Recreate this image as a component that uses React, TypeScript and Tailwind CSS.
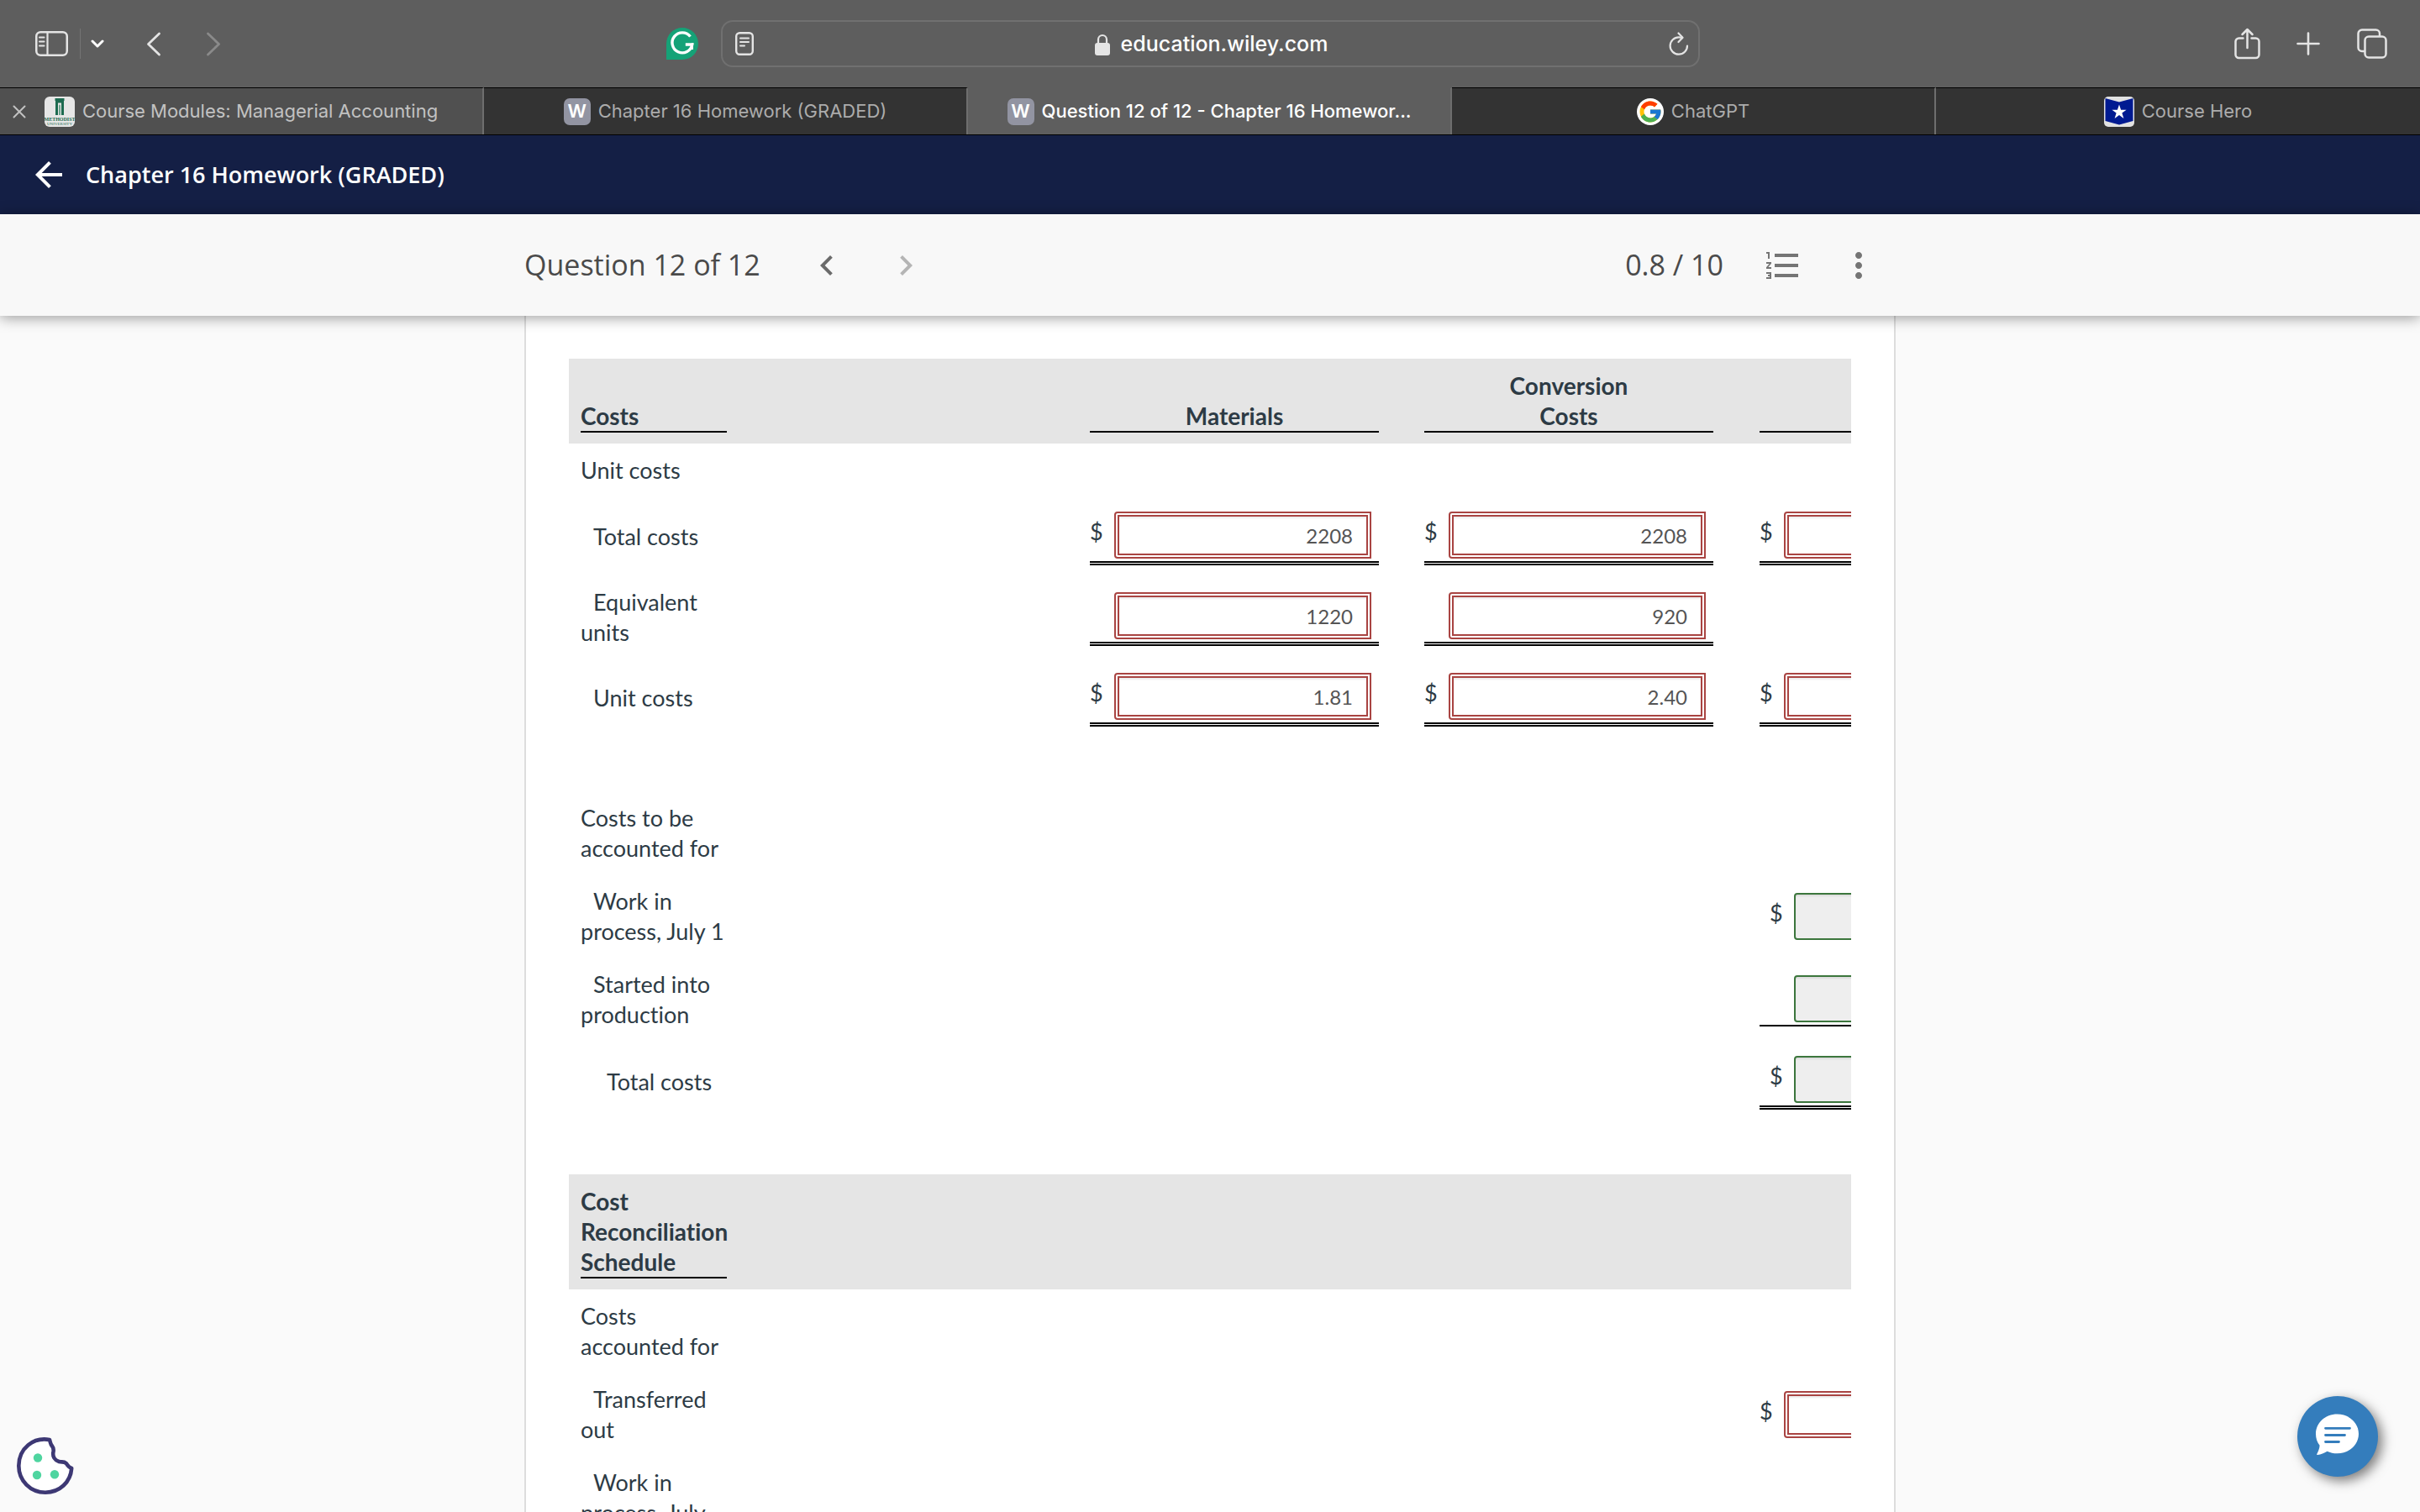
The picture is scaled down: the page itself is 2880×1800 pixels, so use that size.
import React, { ReactNode } from 'react';
import { FcGoogle } from 'react-icons/fc';
import { MdArrowBack, MdChevronLeft, MdChevronRight, MdFormatListNumbered, MdMoreVert } from 'react-icons/md';

type Rule = 'none' | 'single' | 'double';

interface Field {
    value?: string;
    dollar?: boolean;
    correct?: boolean;
    rule: Rule;
}

interface Row {
    label: string;
    level: 0 | 1 | 2;
    compact?: boolean;
    cells?: (Field | null)[];
}

const indents = ['', 'indent-[15px]', 'indent-[31px]'];

// Total lines drawn under the amounts
const rules: Record<Rule, string> = {
    none: 'hidden',
    single: 'h-[2px] bg-black',
    double: 'h-[5px] border-y-2 border-black',
};

const columns = ['Materials', 'Conversion Costs', 'Total'];

const unitRows: Row[] = [
    { label: 'Unit costs', level: 0 },
    {
        label: 'Total costs',
        level: 1,
        compact: true,
        cells: [
            { value: '2208', dollar: true, rule: 'double' },
            { value: '2208', dollar: true, rule: 'double' },
            { dollar: true, rule: 'double' },
        ],
    },
    {
        label: 'Equivalent units',
        level: 1,
        compact: true,
        cells: [{ value: '1220', rule: 'double' }, { value: '920', rule: 'double' }, null],
    },
    {
        label: 'Unit costs',
        level: 1,
        compact: true,
        cells: [
            { value: '1.81', dollar: true, rule: 'double' },
            { value: '2.40', dollar: true, rule: 'double' },
            { dollar: true, rule: 'double' },
        ],
    },
];

const accountRows: Row[] = [
    { label: 'Costs to be accounted for', level: 0 },
    { label: 'Work in process, July 1', level: 1, cells: [null, null, { dollar: true, correct: true, rule: 'none' }] },
    { label: 'Started into production', level: 1, cells: [null, null, { correct: true, rule: 'single' }] },
    { label: 'Total costs', level: 2, cells: [null, null, { dollar: true, correct: true, rule: 'double' }] },
];

const reconciliationRows: Row[] = [
    { label: 'Costs accounted for', level: 0 },
    { label: 'Transferred out', level: 1, cells: [null, null, { dollar: true, rule: 'none' }] },
    { label: 'Work in process, July', level: 1 },
];

function MoneyField({ field, label }: { field: Field; label: string }) {
    return (
        <>
            <div className={`flex items-center pr-[9px] ${field.correct ? 'pl-3' : ''}`}>
                <span className="w-[29px] shrink-0 pb-[6px]">{field.dollar ? '$' : ''}</span>
                <input
                    type="text"
                    aria-label={label}
                    defaultValue={field.value}
                    readOnly={field.correct}
                    className={`mt-[6px] mb-[3px] h-14 w-full min-w-0 rounded-l px-4 text-right text-2xl text-[#555] shadow-[inset_0_2px_2px_rgba(0,0,0,0.075)] outline-none ${
                        field.correct ? 'border-2 border-[#3c763d] bg-[#eee]' : 'border-[6px] border-double border-[#a94442] bg-white'
                    }`}
                />
            </div>
            <div className={rules[field.rule]} />
        </>
    );
}

function CostRow({ row }: { row: Row }) {
    return (
        <tr>
            <td className={`px-[14px] ${row.compact ? 'py-3' : 'pt-[14px] pb-[13px]'} ${indents[row.level]}`}>{row.label}</td>
            {columns.map((column, i) => {
                const field = row.cells?.[i];
                return (
                    <React.Fragment key={column}>
                        <td />
                        <td className={field ? 'px-[14px] pt-3 pb-[14px]' : ''}>
                            {field && <MoneyField field={field} label={`${row.label} ${column}`} />}
                        </td>
                    </React.Fragment>
                );
            })}
        </tr>
    );
}

function SpacerRow() {
    return (
        <tr>
            <td colSpan={7} className="h-[63px]" />
        </tr>
    );
}

function Costs() {
    return (
        <table className="w-[1800px] table-fixed border-collapse text-left font-['Lato',sans-serif] text-[27px] leading-9 text-[#2d3b45] [font-variant-ligatures:none]">
            <colgroup>
                <col className="w-[202px]" />
                <col className="w-[404px]" />
                <col className="w-[372px]" />
                <col className="w-[26px]" />
                <col className="w-[372px]" />
                <col className="w-[27px]" />
                <col />
            </colgroup>
            <tbody>
                <tr className="bg-[#e5e5e5] align-bottom text-[28px]">
                    <th className="px-[14px] pt-[14px] pb-[13px]">
                        <div className="border-b-2 border-black">Costs</div>
                    </th>
                    <td />
                    <th className="px-[14px] pt-[14px] pb-[13px] text-center">
                        <div className="border-b-2 border-black">Materials</div>
                    </th>
                    <td />
                    <th className="px-[14px] pt-[14px] pb-[13px] text-center">
                        <div className="border-b-2 border-black">
                            Conversion
                            <br />
                            Costs
                        </div>
                    </th>
                    <td />
                    <td className="px-[14px] pt-[14px] pb-[13px]">
                        <div className="h-[38px] border-b-2 border-black" />
                    </td>
                </tr>
                {unitRows.map((row, i) => (
                    <CostRow key={i} row={row} />
                ))}
                <SpacerRow />
                {accountRows.map((row, i) => (
                    <CostRow key={i} row={row} />
                ))}
                <SpacerRow />
                <tr className="bg-[#e5e5e5] text-[28px]">
                    <th className="px-[14px] pt-[14px] pb-[13px]">
                        <div className="border-b-2 border-black">Cost Reconciliation Schedule</div>
                    </th>
                    <td colSpan={6} />
                </tr>
                {reconciliationRows.map((row, i) => (
                    <CostRow key={i} row={row} />
                ))}
            </tbody>
        </table>
    );
}

function Toolbar() {
    return (
        <div className="grid h-[104px] grid-cols-[1fr_1165px_1fr] items-center bg-[#5e5e5e] text-[#e4e4e4]">
            <div className="flex items-center pr-[27px] pl-[42px]">
                <button type="button" aria-label="Sidebar">
                    <svg className="h-[30px] w-[39px]" viewBox="0 0 39 30" fill="none" stroke="currentColor">
                        <rect x="1.25" y="1.25" width="36.5" height="27.5" rx="5" strokeWidth="2.5" />
                        <path d="M14.5 1v28" strokeWidth="2.2" />
                        <path d="M5 7.5h5.5M5 12.5h5.5M5 17.5h5.5" strokeWidth="2" strokeLinecap="round" />
                    </svg>
                </button>
                <span className="ml-[14px] h-9 w-px bg-[#747474]" />
                <button type="button" aria-label="Tab groups" className="ml-3">
                    <svg className="h-[10px] w-4" viewBox="0 0 16 10" fill="none" stroke="white" strokeWidth="3" strokeLinecap="round" strokeLinejoin="round">
                        <path d="M2 2l6 6 6-6" />
                    </svg>
                </button>
                <button type="button" aria-label="Back" className="ml-[50px]">
                    <svg className="h-[29px] w-[18px]" viewBox="0 0 18 29" fill="none" stroke="currentColor" strokeWidth="2.8" strokeLinecap="round" strokeLinejoin="round">
                        <path d="M15.5 2L2.5 14.5l13 12.5" />
                    </svg>
                </button>
                <button type="button" aria-label="Forward" className="ml-[53px] text-[#8a8a8a]">
                    <svg className="h-[29px] w-[18px]" viewBox="0 0 18 29" fill="none" stroke="currentColor" strokeWidth="2.8" strokeLinecap="round" strokeLinejoin="round">
                        <path d="M2.5 2l13 12.5-13 12.5" />
                    </svg>
                </button>
                <button type="button" aria-label="Grammarly" className="ml-auto">
                    <svg className="h-[38px] w-[38px]" viewBox="0 0 38 38" fill="none">
                        <path d="M19 0a19 19 0 1 1 0 38H0V19A19 19 0 0 1 19 0z" fill="#15a277" />
                        <path d="M28.5 10.5a12 12 0 1 0 2.3 9.5h-8" stroke="white" strokeWidth="3.4" />
                        <path d="M31 18v8" stroke="white" strokeWidth="2" />
                    </svg>
                </button>
            </div>
            <div className="flex h-14 items-center rounded-[14px] border-2 border-[#707070] pr-[11px] pl-[15px]">
                <button type="button" aria-label="Reader">
                    <svg className="h-7 w-[22px]" viewBox="0 0 22 28" fill="none" stroke="currentColor" strokeLinecap="round">
                        <rect x="1.2" y="1.2" width="19.6" height="25.6" rx="4" strokeWidth="2.4" />
                        <path d="M6 7.5h10M6 12h10M6 16.5h5" strokeWidth="2" />
                    </svg>
                </button>
                <label className="flex flex-1 items-center justify-center gap-3 pt-px">
                    <svg className="h-[26px] w-5" viewBox="0 0 20 26" fill="none">
                        <path d="M5 12V7a5 5 0 0 1 10 0v5" stroke="currentColor" strokeWidth="2.2" />
                        <rect x="1" y="11" width="18" height="15" rx="3" fill="currentColor" />
                    </svg>
                    <input
                        type="text"
                        aria-label="Address"
                        defaultValue="education.wiley.com"
                        className="[field-sizing:content] bg-transparent font-['Inter',sans-serif] text-[25px] font-medium text-white outline-none"
                    />
                </label>
                <button type="button" aria-label="Reload">
                    <svg className="h-7 w-6" viewBox="0 0 24 28" fill="none" stroke="currentColor" strokeWidth="2.2" strokeLinecap="round" strokeLinejoin="round">
                        <path d="M22 16.5A10.2 10.2 0 1 1 12 6.3c1.5 0 2.8.2 4 .7" />
                        <path d="M11.5 1.5l5 5.3-5 5.2" />
                    </svg>
                </button>
            </div>
            <div className="flex items-center justify-end pr-[39px]">
                <button type="button" aria-label="Share">
                    <svg className="h-[38px] w-8" viewBox="0 0 32 38" fill="none" stroke="currentColor" strokeWidth="2.5" strokeLinecap="round" strokeLinejoin="round">
                        <path d="M10.5 12.5H5.5a4 4 0 0 0-4 4v15.5a4 4 0 0 0 4 4h20a4 4 0 0 0 4-4V16.5a4 4 0 0 0-4-4h-5" />
                        <path d="M15.5 24V2M9.5 8l6-6 6 6" />
                    </svg>
                </button>
                <button type="button" aria-label="New tab" className="ml-[42px]">
                    <svg className="h-7 w-7" viewBox="0 0 28 28" fill="none" stroke="currentColor" strokeWidth="2.6" strokeLinecap="round">
                        <path d="M14 1.5v25M1.5 14h25" />
                    </svg>
                </button>
                <button type="button" aria-label="Tab overview" className="ml-11">
                    <svg className="h-9 w-9" viewBox="0 0 36 36" fill="none" stroke="currentColor" strokeWidth="2.5">
                        <rect x="9.5" y="9.5" width="25" height="25" rx="4.5" />
                        <path d="M9.5 27H6a4.5 4.5 0 0 1-4.5-4.5V6A4.5 4.5 0 0 1 6 1.5h16.5A4.5 4.5 0 0 1 27 6v3.5" />
                    </svg>
                </button>
            </div>
        </div>
    );
}

function WileyIcon() {
    return (
        <span className="flex h-8 w-8 shrink-0 items-center justify-center rounded-[7px] bg-[#9294a2] text-[22px] font-semibold text-white">
            W
        </span>
    );
}

function MethodistIcon() {
    return (
        <svg className="h-9 w-9 shrink-0" viewBox="0 0 36 36">
            <rect width="36" height="36" rx="6" fill="#e6e6e6" />
            <rect x="12.5" y="2" width="11" height="3" fill="#1d6b50" />
            <path d="M14.5 22V6h7v16" fill="none" stroke="#1d6b50" strokeWidth="3" />
            <path d="M17 22V10.5a1 1 0 0 1 2 0V22z" fill="#6fa48f" />
            <text x="18" y="28.5" textAnchor="middle" fontFamily="Liberation Serif, serif" fontSize="6" fontWeight="700" fill="#1d6b50">
                METHODIST
            </text>
            <text x="18" y="34" textAnchor="middle" fontFamily="Liberation Serif, serif" fontSize="5" fill="#1d6b50">
                UNIVERSITY
            </text>
        </svg>
    );
}

function CourseHeroIcon() {
    return (
        <svg className="h-9 w-9 shrink-0" viewBox="0 0 36 36">
            <rect width="36" height="36" rx="5" fill="#e2e2e2" />
            <path d="M1.5 2L18 6.5 34.5 2v27L18 33.5 1.5 29z" fill="#001a91" />
            <path d="M18 9.5l2.1 6.2h6.5l-5.2 3.9 2 6.3-5.4-3.8-5.4 3.8 2-6.3-5.2-3.9h6.5z" fill="white" />
        </svg>
    );
}

interface TabProps {
    icon: ReactNode;
    title: string;
    state?: 'idle' | 'hover' | 'active';
}

const tabStyles = {
    idle: 'bg-[#333] border-t-black text-[#acacac]',
    hover: 'bg-[#505050] border-t-black text-[#c2c2c2]',
    active: 'bg-[#5e5e5e] border-t-[#5e5e5e] font-medium text-white',
};

function Tab({ icon, title, state = 'idle' }: TabProps) {
    return (
        <div className={`flex min-w-0 items-center border-t border-r-2 border-r-[#6e6e6e] last:border-r-0 ${tabStyles[state]}`}>
            <div className="flex-1 px-[15px]">
                {state === 'hover' && (
                    <button type="button" aria-label="Close tab" className="block">
                        <svg className="h-4 w-4" viewBox="0 0 16 16" stroke="currentColor" strokeWidth="2" strokeLinecap="round">
                            <path d="M1.5 1.5l13 13M14.5 1.5l-13 13" />
                        </svg>
                    </button>
                )}
            </div>
            <a href="#" className="flex items-center gap-[9px] whitespace-nowrap">
                {icon}
                {title}
            </a>
            <div className="flex-1 px-[15px]" />
        </div>
    );
}

function TabBar() {
    return (
        <nav className="grid h-[57px] grid-cols-5 border-b border-black bg-[#5e5e5e] font-['Inter',sans-serif] text-[22px]">
            <Tab icon={<MethodistIcon />} title="Course Modules: Managerial Accounting" state="hover" />
            <Tab icon={<WileyIcon />} title="Chapter 16 Homework (GRADED)" />
            <Tab icon={<WileyIcon />} title="Question 12 of 12 - Chapter 16 Homewor..." state="active" />
            <Tab
                icon={
                    <span className="flex h-8 w-8 items-center justify-center rounded-full bg-white">
                        <FcGoogle className="h-[30px] w-[30px]" />
                    </span>
                }
                title="ChatGPT"
            />
            <Tab icon={<CourseHeroIcon />} title="Course Hero" />
        </nav>
    );
}

function QuestionBar() {
    return (
        <div className="relative z-10 bg-[#f8f8f8] shadow-[0_2px_16px_rgba(0,0,0,0.4)]">
            <div className="mx-auto flex h-[121px] w-full max-w-[1632px] items-center pr-5 font-['Open_Sans',sans-serif] text-[34px] text-[#4a4a4a]">
                <h2>Question 12 of 12</h2>
                <button type="button" aria-label="Previous question" className="ml-[55px] text-[#6b6b6b]">
                    <MdChevronLeft className="h-12 w-12" />
                </button>
                <button type="button" aria-label="Next question" disabled className="ml-[46px] text-[#b5b5b5]">
                    <MdChevronRight className="h-12 w-12" />
                </button>
                <span className="ml-auto">0.8 / 10</span>
                <button type="button" aria-label="Question list" className="ml-[47px] text-[#757575]">
                    <MdFormatListNumbered className="h-12 w-12" />
                </button>
                <button type="button" aria-label="More options" className="ml-[42px] text-[#757575]">
                    <MdMoreVert className="h-12 w-12" />
                </button>
            </div>
        </div>
    );
}

export default function App() {
    return (
        <div className="relative flex h-screen flex-col overflow-hidden bg-[#fafafa]">
            <Toolbar />
            <TabBar />
            <header className="flex h-[94px] shrink-0 items-center gap-5 bg-[#141f45] px-[34px] text-white">
                <a href="#" aria-label="Back">
                    <MdArrowBack className="h-12 w-12" />
                </a>
                <h1 className="font-['Open_Sans',sans-serif] text-[27px] font-semibold">Chapter 16 Homework (GRADED)</h1>
            </header>
            <QuestionBar />
            <main className="min-h-0 flex-1">
                <div className="mx-auto w-full max-w-[1632px] border-x-2 border-[#ddd] bg-white px-[51px] py-[51px]">
                    <div className="overflow-hidden">
                        <Costs />
                    </div>
                </div>
            </main>
            <button type="button" aria-label="Cookie settings" className="absolute bottom-[21px] left-5">
                <svg className="h-[68px] w-[68px]" viewBox="0 0 68 68">
                    <path
                        d="M39 3C20 -0.5 2.5 13 2.3 34c0 18 14 31.7 31.7 31.7C51 65.7 64 53.5 65.2 37c-4-1.5-4-3-6.5-6-3-2.5-5-1-8.5-2-5-1.5-8-6-6.7-12 .5-3 .5-4-1.500-6.5C40 8.5 40 6 39 3z"
                        fill="white"
                        stroke="#3d3874"
                        strokeWidth="4.6"
                        strokeLinejoin="round"
                    />
                    <circle cx="25" cy="24.5" r="5.2" fill="#4fd5a0" />
                    <circle cx="24" cy="45" r="5.2" fill="#4fd5a0" />
                    <circle cx="45" cy="44.3" r="5.2" fill="#4fd5a0" />
                </svg>
            </button>
            <button
                type="button"
                aria-label="Open chat"
                className="absolute right-[50px] bottom-[42px] rounded-full bg-[#347dbc] shadow-[5px_5px_14px_rgba(0,0,0,0.5)]"
            >
                <svg className="h-24 w-24" viewBox="0 0 96 96">
                    <path
                        d="M47.5 21.5c14.2 0 25.5 10.4 25.5 23.4S61.7 68.3 47.5 68.3c-4.3 0-8.4-.9-12-2.6-3.5 2.3-7.5 3.9-11.3 4.4-.9.1-1.2-.6-.8-1.3 1.5-2.6 3-6.5 3.2-10C23.6 54.8 22 50.1 22 44.9c0-13 11.3-23.4 25.5-23.4z"
                        fill="white"
                    />
                    <path d="M33.5 38.3h29M33.5 46.5h23M33.5 54.5h16" stroke="#347dbc" strokeWidth="2.8" strokeLinecap="round" />
                </svg>
            </button>
        </div>
    );
}
